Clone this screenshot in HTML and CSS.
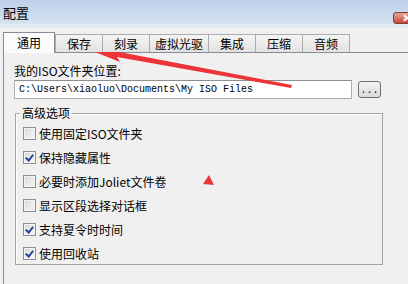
FILE: index.html
```html
<!DOCTYPE html>
<html lang="zh-CN"><head>
<meta charset="utf-8">
<title>配置</title>
<link rel="stylesheet" href="styles.css">
</head>
<body>
<div class="titlebar">
  <span class="title">配置</span>
  <span class="close"></span>
</div>

<div class="tabs">
  <div class="tab active">通用</div>
  <div class="tab">保存</div>
  <div class="tab">刻录</div>
  <div class="tab">虚拟光驱</div>
  <div class="tab">集成</div>
  <div class="tab">压缩</div>
  <div class="tab">音频</div>
</div>

<div class="panel">
  <div class="label">我的ISO文件夹位置:</div>
  <div class="pathrow">
    <div class="path">C:\Users\xiaoluo\Documents\My ISO Files</div>
    <div class="browse">...</div>
  </div>

  <fieldset class="group">
    <legend>高级选项</legend>
    <div class="opt"><span class="box"></span>使用固定ISO文件夹</div>
    <div class="opt"><span class="box on"></span>保持隐藏属性</div>
    <div class="opt"><span class="box"></span>必要时添加Joliet文件卷</div>
    <div class="opt"><span class="box"></span>显示区段选择对话框</div>
    <div class="opt"><span class="box on"></span>支持夏令时时间</div>
    <div class="opt"><span class="box on"></span>使用回收站</div>
  </fieldset>
</div>

<svg class="marks" width="408" height="284" viewBox="0 0 408 284">
  <polygon points="95,52 112,46 114,51 292,85 291,88 117,57 120,62" fill="#ec3438"/>
  <polygon points="203,184 214,185 209,175" fill="#ec3438"/>
</svg>
</body></html>
```

FILE: styles.css
```css
body{ margin:0; width:408px; height:284px; overflow:hidden; position:relative; background:#f0f0f0; color:#000; font-family:"Noto Sans CJK SC", sans-serif; font-size:12px; }

.titlebar{ height:24px; display:flex; align-items:center; justify-content:space-between; padding-left:3px; background:linear-gradient(#bcd0e9, #d6e3f2); border-bottom:4px solid #e2e9f2; }
.title{ font-size:13px; line-height:16px; margin-top:2px; }
.close{ width:30px; height:10px; margin-top:11px; margin-right:-17px; border:1px solid #8a3b34; border-radius:3px; background:linear-gradient(#e6a89c, #c4473b); position:relative; }
.close::before, .close::after{ content:""; position:absolute; left:9px; top:4px; width:9px; height:2px; background:#fff; transform:rotate(35deg); }
.close::after{ transform:rotate(-35deg); }

.tabs{ display:flex; align-items:flex-end; height:20px; padding:4px 0 0 3px; position:relative; z-index:1; }
.tab{ box-sizing:border-box; min-width:48px; height:18px; padding:0 5px; margin-left:-1px; border:1px solid #acacac; border-bottom:none; background:linear-gradient(#f4f4f4, #e2e2e2); text-align:center; line-height:17px; }
.tab.active{ min-width:52px; height:21px; margin-left:0; margin-bottom:-1px; margin-right:1px; border-color:#898c95; background:#fbfbfb; line-height:20px; }

.panel{ margin-left:3px; height:231px; border-top:1px solid #898c95; border-left:1px solid #898c95; padding:11px 0 0 10px; }
.label{ line-height:14px; height:14px; }
.pathrow{ display:flex; margin-top:2px; }
.path{ box-sizing:border-box; width:338px; height:19px; padding-left:4px; border:1px solid #abadb3; border-top-color:#8e8f8f; background:#fff; font-family:"Liberation Mono", monospace; font-size:10px; line-height:17px; white-space:nowrap; }
.browse{ box-sizing:border-box; width:23px; height:17px; margin:1px 0 0 6px; border:1px solid #707070; border-radius:3px; background:linear-gradient(#f2f2f2, #dadada); font-family:"Liberation Mono", monospace; font-size:10px; line-height:17px; text-align:center; }

.group{ box-sizing:border-box; width:368px; height:159px; margin:7px 0 0 1px; padding:1px 0 0 6px; border:1px solid #a3a3a3; box-shadow:inset 1px 1px #fff; }
.group legend{ padding:0 2px; margin-left:-2px; line-height:14px; }
.opt{ display:flex; align-items:center; height:24px; }
.box{ box-sizing:border-box; width:13px; height:13px; margin:0 3px 0 1px; border:1px solid #8e8f8f; background:linear-gradient(135deg, #d8d8d8, #f8f8f8); box-shadow:inset 0 0 0 1px #f4f4f4; position:relative; }
.box.on::after{ content:""; position:absolute; left:3px; top:1px; width:3px; height:6px; border:solid #2c448f; border-width:0 2px 2px 0; transform:rotate(40deg); }

.marks{ position:absolute; left:0; top:0; pointer-events:none; }
```
